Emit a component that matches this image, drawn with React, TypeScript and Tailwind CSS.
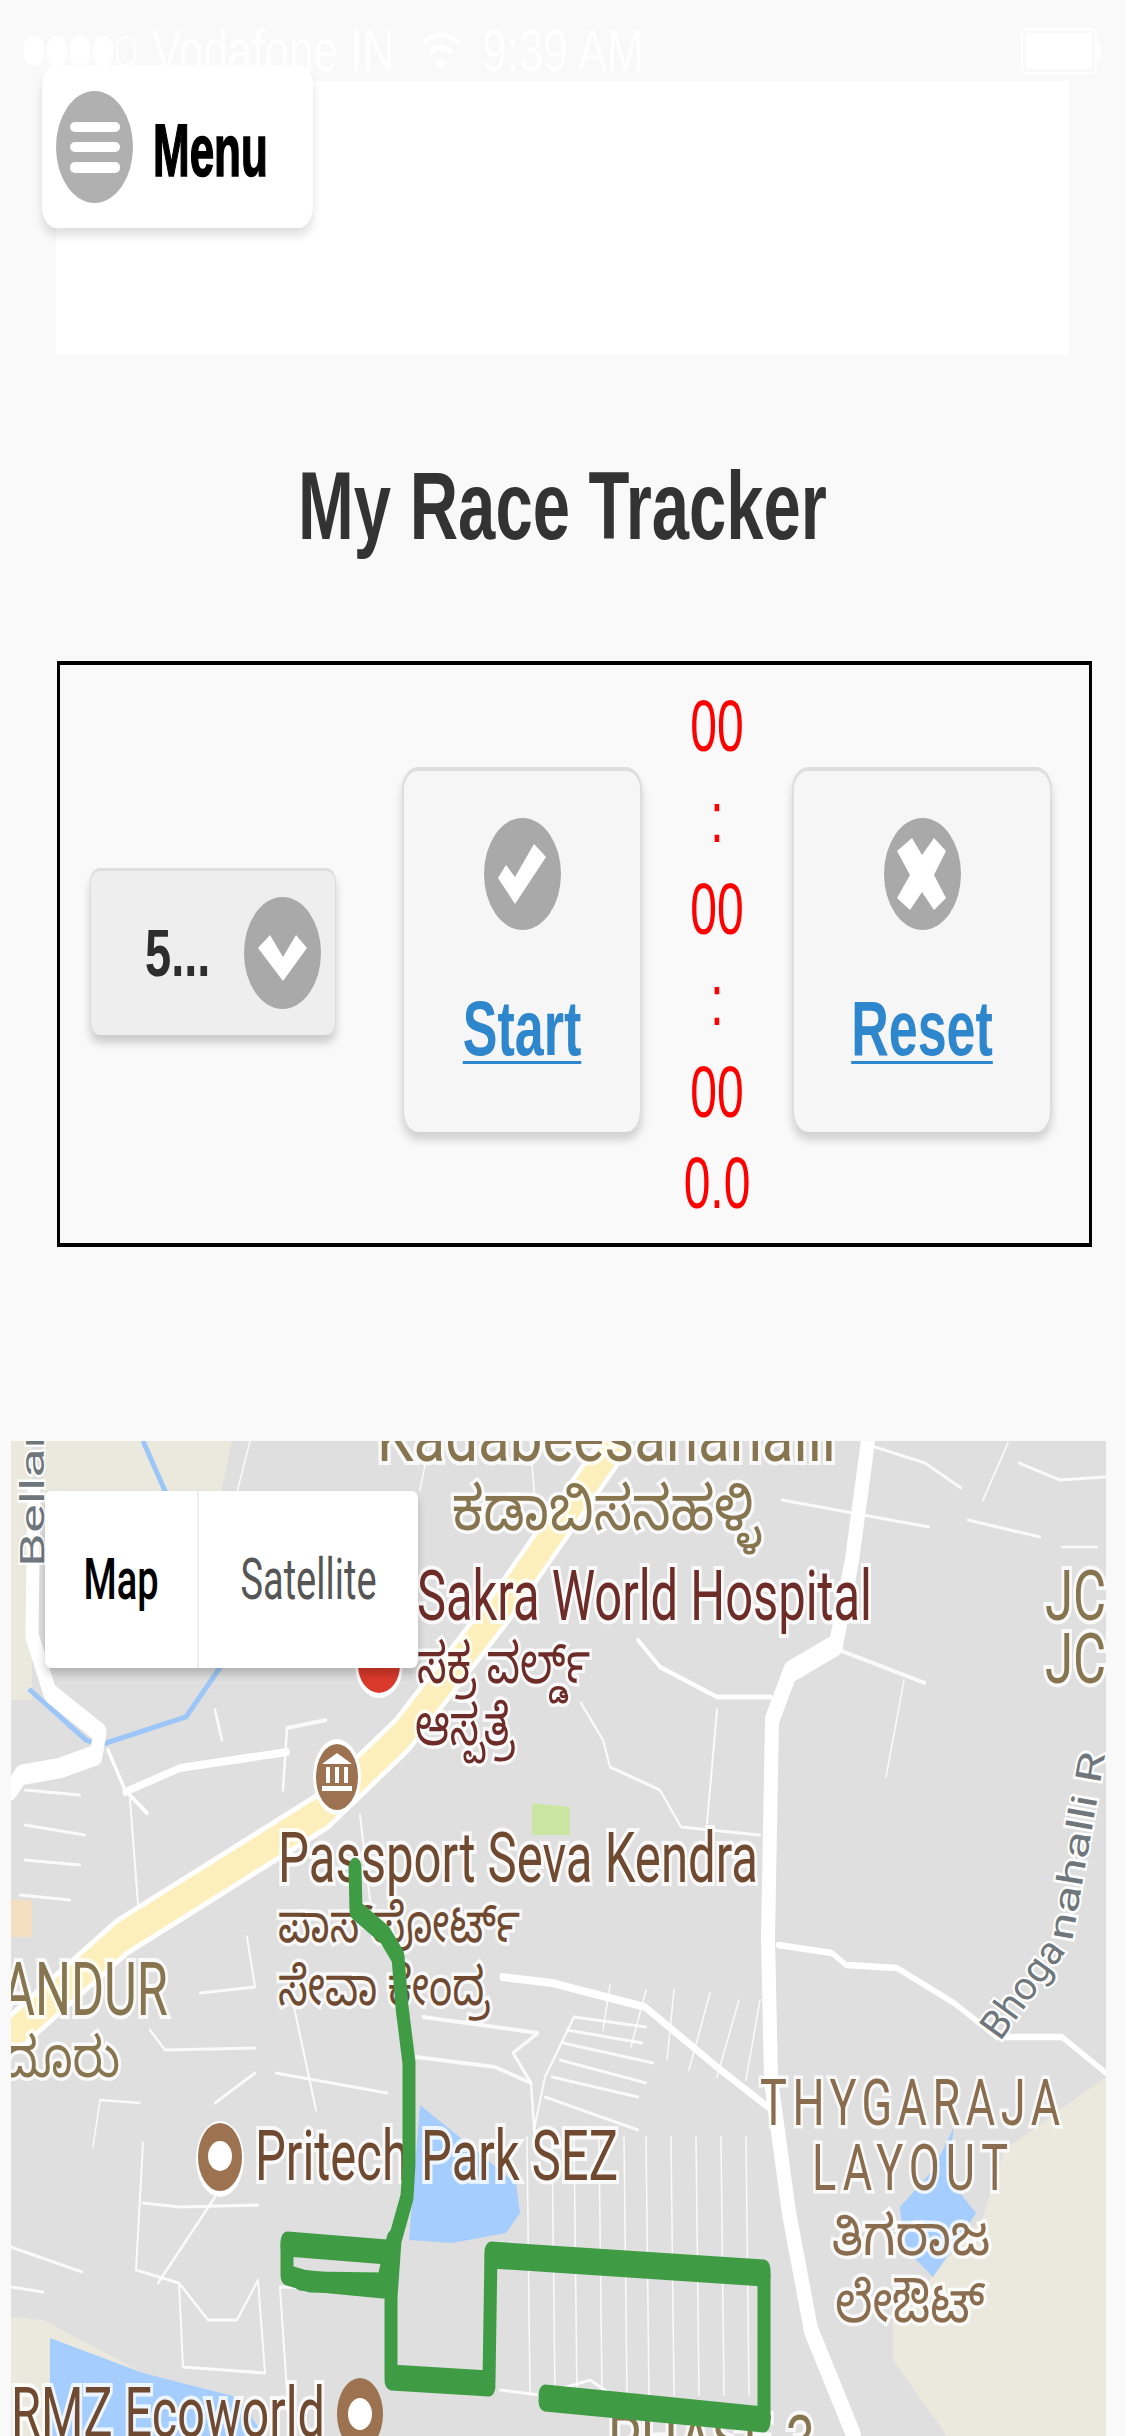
import React from "react";

const SY = 1.6;
const pts = (p: number[][]) => p.map(([x, y]) => `${x},${y / SY}`).join(" ");

const whiteRoads: [number, number[][]][] = [
  [14, [[868, 1441], [852, 1560], [836, 1645], [790, 1672], [772, 1720], [768, 1937], [771, 2080], [789, 2213], [811, 2330], [854, 2436]]],
  [13, [[34, 1491], [32, 1636], [50, 1693], [100, 1733], [96, 1755], [60, 1768], [21, 1775], [11, 1790]]],
  [5, [[125, 1792], [180, 1768], [287, 1752]]],
  [3, [[108, 1750], [125, 1790], [147, 1813]]],
  [2.5, [[215, 1710], [222, 1740]]],
  [2.5, [[326, 1720], [287, 1728], [283, 1790]]],
  [2.5, [[839, 1650], [925, 1683]]],
  [3, [[638, 1640], [660, 1667], [717, 1697], [771, 1697]]],
  [2, [[581, 1703], [603, 1740], [610, 1767], [660, 1790], [681, 1827], [760, 1835]]],
  [2, [[717, 1710], [707, 1823]]],
  [1.5, [[904, 1680], [886, 1777]]],
  [2, [[875, 1447], [925, 1463], [961, 1488]]],
  [2, [[782, 1500], [929, 1527]]],
  [2, [[968, 1520], [1040, 1537]]],
  [2, [[1019, 1463], [1060, 1480], [1105, 1477]]],
  [1.5, [[1008, 1443], [983, 1500]]],
  [1.5, [[1062, 1547], [1097, 1547]]],
  [1.5, [[530, 1441], [535, 1500]]],
  [1.5, [[430, 1441], [420, 1490]]],
  [1.5, [[250, 1441], [235, 1500]]],
  [4, [[778, 1945], [832, 1953], [846, 1965], [897, 1968], [954, 2003], [997, 2037], [1062, 2037], [1106, 2073]]],
  [5, [[502, 1977], [552, 1983], [645, 2007], [717, 2067], [768, 2107]]],
  [2, [[150, 2030], [165, 2050], [255, 2048]]],
  [2, [[200, 1993], [255, 1987], [247, 1937]]],
  [2, [[294, 2007], [316, 2110]]],
  [2, [[276, 2073], [387, 2093]]],
  [1.5, [[140, 2103], [100, 2100], [93, 2147]]],
  [2, [[215, 2103], [255, 2073]]],
  [2, [[143, 2143], [136, 2270], [179, 2283], [208, 2320], [237, 2320], [258, 2280], [265, 2373], [183, 2367], [179, 2283]]],
  [2, [[143, 2203], [179, 2207], [258, 2205]]],
  [2, [[215, 2197], [158, 2283]]],
  [2, [[11, 2247], [82, 2272]]],
  [2, [[11, 2287], [43, 2292]]],
  [2, [[280, 2287], [387, 2290]]],
  [2, [[280, 2288], [290, 2436]]],
  [2.5, [[416, 2057], [495, 2067], [531, 2083], [535, 2140]]],
  [2.5, [[423, 2017], [538, 2033], [513, 2053], [531, 2083]]],
  [2, [[574, 2017], [646, 2027]]],
  [2, [[574, 2017], [545, 2077], [534, 2130]]],
  [2, [[567, 2030], [642, 2043]]],
  [2, [[563, 2043], [653, 2063]]],
  [2, [[560, 2060], [646, 2083]]],
  [2, [[552, 2077], [638, 2097]]],
  [2, [[545, 2097], [638, 2130]]],
  [1.5, [[610, 1985], [603, 2030]]],
  [1.5, [[646, 1990], [631, 2047]]],
  [1.5, [[674, 1990], [667, 2060]]],
  [1.5, [[710, 1993], [689, 2070]]],
  [1.5, [[739, 2000], [717, 2077]]],
  [1.5, [[760, 2000], [746, 2080]]],
  [2, [[25, 1790], [80, 1795]]],
  [2, [[25, 1825], [85, 1835]]],
  [2, [[25, 1860], [80, 1865]]],
  [2, [[20, 1895], [70, 1900]]],
  [2, [[130, 1800], [140, 1930]]],
  [2, [[360, 1815], [370, 1900]]],
  [2, [[500, 2390], [540, 2395], [590, 2380], [620, 2400]]],
];

const grid = [527, 552, 574, 599, 624, 646, 671, 696, 721, 746];

const route = [[355, 1868], [356, 1910], [385, 1935], [398, 1957], [402, 2007], [409, 2063], [409, 2163], [407, 2197], [395, 2240], [391, 2297], [391, 2375], [489, 2381], [491, 2252], [764, 2270], [764, 2417], [545, 2395]];
const loop = [[387, 2250], [287, 2242], [287, 2275], [310, 2282], [383, 2283], [393, 2240]];
const repeatPasses = [
  [[491, 2258], [764, 2276]],
  [[391, 2380], [489, 2386]],
  [[545, 2401], [764, 2422]],
  [[287, 2246], [387, 2254]],
  [[300, 2280], [383, 2288]],
];

type LabelProps = { x: number; y: number; w: number; fs: number; sy?: number; fill: string; spaced?: boolean; children: React.ReactNode };
function Label({ x, y, w, fs, sy = 1.6, fill, spaced = false, children }: LabelProps) {
  return (
    <text
      transform={`translate(${x} ${y}) scale(1 ${sy})`}
      fontSize={fs}
      fill={fill}
      stroke="#ffffff"
      strokeWidth={5}
      strokeOpacity={0.8}
      paintOrder="stroke"
      textLength={w}
      lengthAdjust={spaced ? "spacing" : "spacingAndGlyphs"}
    >
      {children}
    </text>
  );
}

const OLIVE = "#86754f";
const BROWN = "#6f4a30";
const TAN = "#8a6d4e";
const MAROON = "#6e2c28";
const GREY = "#6f777c";

function MapDrawing() {
  return (
    <svg
      viewBox="11 1441 1095 995"
      className="block w-full h-full font-['Roboto','Noto_Sans','Noto_Sans_Kannada',sans-serif]"
    >
      <rect x="11" y="1441" width="1095" height="995" fill="#dfdfdf" />
      <polygon points="43,1441 232,1441 215,1520 43,1520" fill="#ebe9de" />
      <polygon points="11,1441 32,1441 32,1700 11,1700" fill="#ebe9de" />
      <polygon points="1106,2077 1004,2150 983,2217 893,2323 893,2360 947,2436 1106,2436" fill="#ebe9de" />
      <polygon points="11,2317 43,2320 143,2373 237,2397 265,2436 11,2436" fill="#ebe9de" />
      <polygon points="11,1900 32,1900 32,1937 11,1937" fill="#f3dfc0" />
      <polygon points="532,1803 570,1807 570,1835 532,1835" fill="#cbe6a3" />
      <polygon points="420,2105 516,2183 520,2213 506,2233 452,2243 409,2240" fill="#a5cdfd" />
      <polygon points="954,2127 947,2177 976,2213 933,2277 904,2247 900,2207 933,2170" fill="#a5cdfd" />
      <polygon points="50,2338 143,2373 237,2397 265,2436 50,2436" fill="#a5cdfd" />
      <polyline points="143,1441 165,1491 200,1640 219,1669 186,1717 100,1745 86,1740 29,1689" fill="none" stroke="#9cc6f8" strokeWidth="5" />

      <g transform={`scale(1 ${SY})`} fill="none" strokeLinecap="round" strokeLinejoin="round">
        {grid.map((x) => (
          <polyline key={x} points={pts([[x, 2137], [x + 3, 2395]])} stroke="#ffffff" strokeOpacity="0.85" strokeWidth="1.5" />
        ))}
        {whiteRoads.map(([w, p], i) => (
          <polyline key={i} points={pts(p)} stroke="#ffffff" strokeWidth={w} strokeOpacity={w < 3 ? 0.85 : 1} />
        ))}
        <polyline points={pts([[617, 1441], [502, 1606], [402, 1735], [323, 1811], [122, 1937], [14, 2033]])} stroke="#ffffff" strokeWidth="26" />
        <polyline points={pts([[617, 1441], [502, 1606], [402, 1735], [323, 1811], [122, 1937], [14, 2033]])} stroke="#fdefbb" strokeWidth="19" />
      </g>

      <ellipse cx="379" cy="1665" rx="24" ry="33" fill="#ffffff" />
      <ellipse cx="379" cy="1665" rx="21" ry="28" fill="#d93a2b" />
      <ellipse cx="337" cy="1777" rx="24" ry="38" fill="#ffffff" />
      <ellipse cx="337" cy="1777" rx="21" ry="33" fill="#9c7250" />
      <path d="M337 1753 L352 1764 L322 1764 Z M326 1767 h4 v16 h-4 Z M335 1767 h4 v16 h-4 Z M344 1767 h4 v16 h-4 Z M322 1786 h30 v5 h-30 Z" fill="#ffffff" />
      <ellipse cx="220" cy="2159" rx="24" ry="38" fill="#ffffff" />
      <ellipse cx="220" cy="2157" rx="22" ry="34" fill="#9c7250" />
      <ellipse cx="220" cy="2156" rx="12" ry="15" fill="#ffffff" />
      <ellipse cx="360" cy="2414" rx="23" ry="36" fill="#9c7250" />
      <ellipse cx="360" cy="2414" rx="12" ry="16" fill="#ffffff" />

      <Label x={377} y={1461} w={459} fs={44} fill={OLIVE}>Kadabeesanahalli</Label>
      <Label x={452} y={1530} w={308} fs={44} sy={1.4} fill={OLIVE}>ಕಡಾಬಿಸನಹಳ್ಳಿ</Label>
      <Label x={417} y={1620} w={455} fs={44} fill={MAROON}>Sakra World Hospital</Label>
      <Label x={417} y={1683} w={173} fs={40} sy={1.4} fill={MAROON}>ಸಕ್ರ ವರ್ಲ್ಡ್</Label>
      <Label x={415} y={1745} w={100} fs={40} sy={1.4} fill={MAROON}>ಆಸ್ಪತ್ರೆ</Label>
      <Label x={278} y={1882} w={480} fs={44} fill={BROWN}>Passport Seva Kendra</Label>
      <Label x={278} y={1942} w={242} fs={38} sy={1.4} fill={BROWN}>ಪಾಸ್‌ಪೋರ್ಟ್</Label>
      <Label x={278} y={2005} w={212} fs={38} sy={1.4} fill={BROWN}>ಸೇವಾ ಕೇಂದ್ರ</Label>
      <Label x={2} y={2015} w={166} fs={46} fill={OLIVE}>ANDUR</Label>
      <Label x={2} y={2077} w={118} fs={40} sy={1.4} fill={OLIVE}>ದೂರು</Label>
      <Label x={760} y={2125} w={300} fs={45} sy={1.42} spaced fill={TAN}>THYGARAJA</Label>
      <Label x={812} y={2190} w={196} fs={45} sy={1.42} spaced fill={TAN}>LAYOUT</Label>
      <Label x={832} y={2255} w={158} fs={40} sy={1.4} fill={TAN}>ತಿಗರಾಜ</Label>
      <Label x={835} y={2322} w={150} fs={40} sy={1.4} fill={TAN}>ಲೇಔಟ್</Label>
      <Label x={255} y={2180} w={363} fs={44} fill={BROWN}>Pritech Park SEZ</Label>
      <Label x={11} y={2437} w={314} fs={44} fill={BROWN}>RMZ Ecoworld</Label>
      <Label x={608} y={2465} w={207} fs={44} fill={OLIVE}>PHASE 3</Label>
      <Label x={1045} y={1620} w={75} fs={44} fill={OLIVE}>JCI</Label>
      <Label x={1045} y={1683} w={75} fs={44} fill={OLIVE}>JCI</Label>
      <text transform="translate(44 1567) rotate(-90) scale(1.6 1)" fontSize="34" fill={GREY} stroke="#ffffff" strokeWidth="3" paintOrder="stroke">Bellandur</text>
      <text transform="translate(1000 2042) rotate(-54) scale(1.1 1.1)" fontSize="36" fill={GREY} stroke="#ffffff" strokeWidth="4" paintOrder="stroke">Bhoga</text>
      <text transform="translate(1072 1942) rotate(-80) scale(1.4 1)" fontSize="36" fill={GREY} stroke="#ffffff" strokeWidth="4" paintOrder="stroke">nahalli R</text>

      <g transform={`scale(1 ${SY})`} fill="none" stroke="#3f9c45" strokeWidth="13" strokeLinecap="round" strokeLinejoin="round">
        <polyline points={pts(route)} />
        <polyline points={pts(loop)} />
        {repeatPasses.map((p, i) => (
          <polyline key={i} points={pts(p)} />
        ))}
      </g>
    </svg>
  );
}

function Ellipse({ children }: { children: React.ReactNode }) {
  return (
    <svg viewBox="0 0 77 112" className="w-[77px] h-[112px] shrink-0 block">
      {children}
    </svg>
  );
}

function StatusBar() {
  return (
    <div className="h-[81px] flex items-start pt-[26px] pl-[24px] pr-[24px] text-white font-['Liberation_Sans',sans-serif] text-[44px] leading-[50px]">
      <div className="flex items-center gap-[3px] h-[50px] mr-[16px]">
        {[0, 1, 2, 3].map((i) => (
          <span key={i} className="w-[20px] h-[30px] rounded-full bg-white" />
        ))}
        <span className="w-[20px] h-[30px] rounded-full border-2 border-white" />
      </div>
      <span className="scale-y-[1.35]">Vodafone IN</span>
      <svg viewBox="0 0 44 44" className="w-[44px] h-[44px] ml-[25px] mt-[4px]" fill="none" stroke="#ffffff" strokeWidth="5">
        <path d="M4 13 Q22 -3 40 13" />
        <path d="M11 23 Q22 12 33 23" />
        <path d="M22 40 L15 31 Q22 26 29 31 Z" fill="#ffffff" stroke="none" />
      </svg>
      <span className="scale-y-[1.35] ml-[19px]">9:39 AM</span>
      <div className="ml-auto flex items-center h-[50px]">
        <div className="w-[76px] h-[46px] rounded-[6px] border-2 border-white p-[3px]">
          <div className="w-full h-full bg-white rounded-[2px]" />
        </div>
        <div className="w-[4px] h-[16px] bg-white rounded-r-[2px]" />
      </div>
    </div>
  );
}

function ActionCard({ label, width, children }: { label: string; width: string; children: React.ReactNode }) {
  return (
    <div className={`${width} h-[365px] flex flex-col items-center pt-[47px] mb-[10px] bg-[#f6f6f6] rounded-[16px/22px] border-t-[4px] border-x-2 border-[#dedede] shadow-[0_8px_8px_rgba(0,0,0,0.16)]`}>
      <Ellipse>{children}</Ellipse>
      <span className="mt-[72px] text-[52px] leading-[52px] font-bold text-[#2e86cc] underline decoration-[2px] underline-offset-[4px] scale-y-[1.5]">
        {label}
      </span>
    </div>
  );
}

export default function App() {
  return (
    <div className="relative w-[1125px] h-[2436px] overflow-hidden bg-[#f9f9f9] font-['Liberation_Sans',sans-serif]">
      <StatusBar />

      <div className="ml-[56px] w-[1013px] h-[274px] bg-white" />

      <h1 className="mt-[101px] h-[100px] text-center text-[67px] leading-[100px] font-bold text-[#333333] scale-y-[1.45]">
        My Race Tracker
      </h1>

      <div className="mt-[105px] ml-[57px] w-[1035px] h-[586px] border-x-[3px] border-y-[4px] border-black flex items-center">
        <div className="ml-[30px] mb-[6px] w-[246px] h-[167px] flex items-center justify-between pl-[54px] pr-[14px] bg-[#eeeeee] rounded-[10px/14px] border-t-[3px] border-x border-[#dedede] shadow-[0_8px_8px_rgba(0,0,0,0.18)]">
          <span className="text-[47px] leading-[46px] font-bold text-[#2d2d2d] scale-y-[1.43]">5...</span>
          <Ellipse>
            <ellipse cx="38.5" cy="56" rx="38.5" ry="56" fill="#a9a9a9" />
            <polygon points="14,51 26,38 39,60 52,38 63,51 39,84" fill="#ffffff" />
          </Ellipse>
        </div>

        <div className="ml-[66px]">
          <ActionCard label="Start" width="w-[240px]">
            <ellipse cx="38.5" cy="56" rx="38.5" ry="56" fill="#a9a9a9" />
            <polygon points="14,60 22,47 31,59 50,26 62,39 31,86" fill="#ffffff" />
          </ActionCard>
        </div>

        <div className="w-[150px] mt-[2px] flex flex-col items-center text-[#ff0000] text-[48px] leading-[91.5px] shrink-0">
          <span className="scale-y-[1.5]">00</span>
          <span className="scale-y-[1.5]">:</span>
          <span className="scale-y-[1.5]">00</span>
          <span className="scale-y-[1.5]">:</span>
          <span className="scale-y-[1.5]">00</span>
          <span className="scale-y-[1.5]">0.0</span>
        </div>

        <ActionCard label="Reset" width="w-[260px]">
          <ellipse cx="38.5" cy="56" rx="38.5" ry="56" fill="#a9a9a9" />
          <polygon points="13,33 28,20 38,37 50,20 62,33 50,57 62,80 50,92 38,74 26,92 13,80 26,57" fill="#ffffff" />
        </ActionCard>
      </div>

      <div className="relative mt-[194px] ml-[11px] w-[1095px] h-[995px] overflow-hidden">
        <MapDrawing />
        <div className="absolute left-[34px] top-[50px] w-[373px] h-[177px] flex bg-white rounded-[6px/8px] shadow-[0_6px_8px_rgba(0,0,0,0.2)] font-['Roboto',sans-serif] text-[38px]">
          <div className="w-[154px] pt-[58px] text-center font-medium text-black border-r-2 border-[#eeeeee]">
            <span className="inline-block scale-y-[1.5] leading-[60px]">Map</span>
          </div>
          <div className="flex-1 pt-[58px] text-center text-[#565656]">
            <span className="inline-block scale-y-[1.5] leading-[60px]">Satellite</span>
          </div>
        </div>
      </div>

      <div className="absolute left-[42px] top-[65px] w-[271px] h-[163px] flex items-center gap-[20px] pl-[14px] bg-white rounded-[14px/22px] shadow-[0_8px_10px_rgba(0,0,0,0.12)]">
        <Ellipse>
          <ellipse cx="38.5" cy="56" rx="38.5" ry="56" fill="#b0b0b0" />
          <rect x="14" y="31" width="50" height="10" rx="5" fill="#ffffff" />
          <rect x="14" y="51" width="50" height="10" rx="5" fill="#ffffff" />
          <rect x="14" y="71" width="50" height="11" rx="5" fill="#ffffff" />
        </Ellipse>
        <span className="mt-[6px] text-[44px] leading-[44px] font-bold text-black scale-y-[1.7] [-webkit-text-stroke:1px_#000]">Menu</span>
      </div>
    </div>
  );
}
